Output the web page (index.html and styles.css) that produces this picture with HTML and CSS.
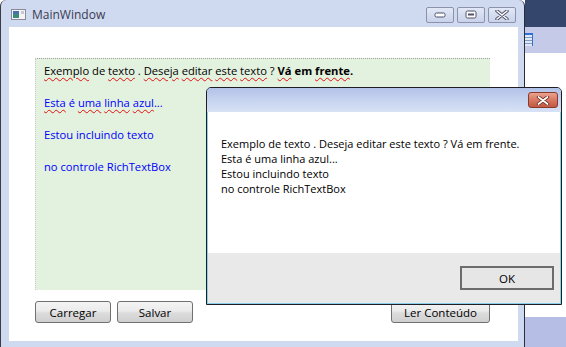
FILE: index.html
```html
<!DOCTYPE html>
<html lang="pt">
<head>
  <meta charset="UTF-8" />
  <title>MainWindow</title>
  <link rel="stylesheet" href="styles.css">
</head>
<body>

  <div class="desktop">

    <div class="main-window">
      <div class="titlebar">
        <svg class="app-icon" width="15" height="11" viewBox="0 0 15 11">
          <rect x="0.5" y="0.5" width="14" height="10" fill="#f4f4f4" stroke="#8a8a9a"/>
          <rect x="2" y="2" width="6" height="7" fill="#3d8a78"/>
          <rect x="2" y="2" width="6" height="3" fill="#4a70b0"/>
          <rect x="10" y="2" width="3" height="3" fill="#c8c8d0"/>
        </svg>
        <span class="title">MainWindow</span>
        <div class="caption-buttons">
          <span class="cap-btn">
            <svg width="12" height="6" viewBox="0 0 12 6"><rect x="1" y="1" width="10" height="4" rx="1.5" fill="#fff" stroke="#505068"/></svg>
          </span>
          <span class="cap-btn">
            <svg width="12" height="9" viewBox="0 0 12 9"><rect x="1" y="1" width="10" height="7" rx="1.5" fill="#fff" stroke="#505068"/><rect x="3" y="3.5" width="6" height="2" fill="#505068"/></svg>
          </span>
          <span class="cap-btn">
            <svg width="14" height="10" viewBox="0 0 14 10"><path d="M2 1 L12 9 M12 1 L2 9" stroke="#505068" stroke-width="3.4" stroke-linecap="round"/><path d="M2 1 L12 9 M12 1 L2 9" stroke="#fff" stroke-width="1.6" stroke-linecap="round"/></svg>
          </span>
        </div>
      </div>

      <div class="frame-body">
        <div class="client">
          <div class="rtb">
            <p class="black"><span class="sp">Exemplo</span> de <span class="sp">texto</span> . <span class="sp">Deseja</span> <span class="sp">editar</span> <span class="sp">este</span> <span class="sp">texto</span> ? <b><span class="sp">Vá</span> em <span class="sp">frente</span>.</b></p>
            <p class="blue"><span class="sp">Esta</span> é <span class="sp">uma</span> <span class="sp">linha</span> <span class="sp">azul</span>...</p>
            <p class="blue">Estou incluindo texto</p>
            <p class="blue">no controle RichTextBox</p>
          </div>
          <div class="button-row">
            <button class="btn btn-small">Carregar</button>
            <button class="btn btn-small">Salvar</button>
            <span class="spacer"></span>
            <button class="btn btn-wide">Ler Conteúdo</button>
          </div>
        </div>
      </div>
    </div>

    <div class="desktop-strip">
      <div class="strip-navy"></div>
      <div class="strip-lavender">
        <div class="strip-icon"></div>
      </div>
      <div class="strip-white"></div>
      <div class="strip-bottom"></div>
    </div>

    <div class="dialog">
      <div class="dialog-titlebar">
        <span class="close-btn">
          <svg width="14" height="9" viewBox="0 0 14 9"><path d="M2.5 1 L11.5 8 M11.5 1 L2.5 8" stroke="#6a2a20" stroke-width="3.4" stroke-linecap="round"/><path d="M2.5 1 L11.5 8 M11.5 1 L2.5 8" stroke="#fff" stroke-width="1.7" stroke-linecap="round"/></svg>
        </span>
      </div>
      <div class="dialog-client">
        <p>Exemplo de texto . Deseja editar este texto ? Vá em frente.</p>
        <p>Esta é uma linha azul...</p>
        <p>Estou incluindo texto</p>
        <p>no controle RichTextBox</p>
      </div>
      <div class="dialog-panel">
        <button class="ok-btn">OK</button>
      </div>
    </div>

  </div>

</body>
</html>
```

FILE: styles.css
```css
body {
  margin: 0;
  font-family: "Open Sans", "Noto Sans", sans-serif;
  font-size: 11px;
  color: #000;
  background: #fff;
}

.desktop {
  position: relative;
  display: flex;
  width: 566px;
  height: 347px;
  overflow: hidden;
}

/* main window */

.main-window {
  width: 525px;
  height: 347px;
  flex-shrink: 0;
  box-sizing: border-box;
  border-left: 1px solid #3c3c48;
  border-right: 1px solid #2c2c38;
  border-radius: 6px 6px 0 0;
  background: #cfdaf0;
  display: flex;
  flex-direction: column;
}

.titlebar {
  height: 27px;
  display: flex;
  align-items: center;
  padding: 2px 0 0 10px;
  box-sizing: border-box;
}

.title {
  margin-left: 6px;
  color: #3a3a52;
  font-size: 12px;
}

.caption-buttons {
  margin-left: auto;
  margin-right: 8px;
  display: flex;
  gap: 3px;
}

.cap-btn {
  width: 26px;
  height: 14px;
  border: 1px solid #8c92ac;
  border-radius: 2px;
  background: linear-gradient(#e2e8f6, #c8d2ea);
  display: flex;
  align-items: center;
  justify-content: center;
}

.frame-body {
  flex: 1;
  padding: 0 6px 6px 8px;
  display: flex;
}

.client {
  flex: 1;
  background: #fff;
  padding: 31px 0 0 26px;
}

.rtb {
  width: 455px;
  height: 232px;
  box-sizing: border-box;
  padding: 4px 8px;
  border-top: 1px dotted #a0a0a0;
  border-left: 1px dotted #c8c8c8;
  background: #e3f1df;
}

.rtb p {
  margin: 0 0 16px;
  line-height: 16px;
  font-size: 11.2px;
  white-space: nowrap;
}

.black {
  color: #000;
}

.blue {
  color: #0000ff;
}

.sp {
  text-decoration: underline wavy #e01010;
  text-decoration-thickness: 1px;
  text-underline-offset: 2px;
}

.button-row {
  display: flex;
  gap: 6px;
  width: 455px;
  margin-top: 11px;
}

.spacer {
  flex: 1;
}

.btn {
  height: 22px;
  font-family: inherit;
  font-size: 11.5px;
  color: #000;
  border: 1px solid #707070;
  border-radius: 3px;
  background: linear-gradient(#f4f4f4 0%, #ebebeb 45%, #dcdcdc 55%, #cfcfcf 100%);
  padding: 0;
  cursor: pointer;
}

.btn-small {
  width: 76px;
}

.btn-wide {
  width: 99px;
}

/* desktop to the right */

.desktop-strip {
  flex: 1;
  display: flex;
  flex-direction: column;
}

.strip-navy {
  height: 27px;
  background: #34466c;
}

.strip-lavender {
  height: 26px;
  background: #c6cae9;
  padding-top: 6px;
  box-sizing: border-box;
}

.strip-icon {
  width: 8px;
  height: 13px;
  border-top: 2px solid #2f6fd8;
  border-right: 1px solid #3a70c8;
  box-sizing: border-box;
  background: repeating-linear-gradient(#dfe8f8 0 2px, #7d9cc8 2px 3px);
}

.strip-white {
  flex: 1;
  background: #fff;
}

.strip-bottom {
  height: 30px;
  background: #b6bee6;
}

/* message box */

.dialog {
  position: absolute;
  left: 206px;
  top: 87px;
  width: 356px;
  height: 218px;
  box-sizing: border-box;
  border: 1px solid #1e1e24;
  border-radius: 5px 5px 0 0;
  box-shadow: inset 0 0 0 1px #86d2ea;
  background: #fff;
  display: flex;
  flex-direction: column;
  overflow: hidden;
}

.dialog-titlebar {
  height: 24px;
  flex-shrink: 0;
  background: linear-gradient(#b2c2e8, #c8d5f0 55%, #d8e2f5);
  display: flex;
  justify-content: flex-end;
  align-items: flex-start;
  padding: 4px 3px 0 0;
  box-sizing: border-box;
}

.close-btn {
  width: 28px;
  height: 14px;
  border: 1px solid #8a3a2a;
  border-radius: 3px;
  background: linear-gradient(#eaa28e, #d87862 50%, #c05a44);
  display: flex;
  align-items: center;
  justify-content: center;
}

.dialog-client {
  flex: 1;
  padding: 24px 13px 0;
  margin: 0 1px;
}

.dialog-client p {
  margin: 0;
  line-height: 15px;
  white-space: nowrap;
}

.dialog-panel {
  height: 50px;
  margin: 0 1px 1px;
  background: #e9e9e9;
  display: flex;
  justify-content: flex-end;
  align-items: flex-start;
  padding: 13px 6px 0 0;
  box-sizing: border-box;
}

.ok-btn {
  width: 94px;
  height: 24px;
  border: 2px solid #6c6c6c;
  background: #e6e6e6;
  font-family: inherit;
  font-size: 11.5px;
  color: #000;
  padding: 0;
}
```
